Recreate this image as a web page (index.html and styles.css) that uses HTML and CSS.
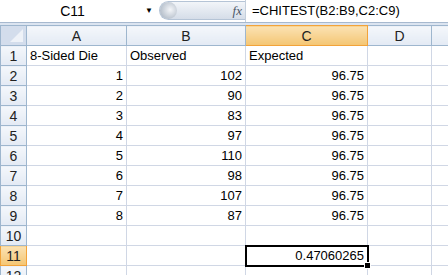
FILE: index.html
```html
<!DOCTYPE html>
<html lang="en">
<head>
  <meta charset="UTF-8">
  <title>CHITEST</title>
  <link rel="stylesheet" href="styles.css">
</head>
<body>
  <!-- Name box and formula bar -->
  <div class="toolbar">
    <div class="namebox">C11</div>
    <div class="dropdown">&#9660;</div>
    <div class="pillarea">
      <div class="pill"><span class="knob"></span><span class="fx">fx</span></div>
    </div>
    <div class="formula">=CHITEST(B2:B9,C2:C9)</div>
  </div>
  <div class="band"></div>

  <table class="sheet">
    <colgroup>
      <col class="c-rh">
      <col class="c-a">
      <col class="c-b">
      <col class="c-c">
      <col class="c-d">
      <col class="c-e">
    </colgroup>
    <tr class="colheads">
      <th class="corner"><span class="tri"></span></th>
      <th>A</th>
      <th>B</th>
      <th class="sel">C</th>
      <th>D</th>
      <th></th>
    </tr>
    <tr><th>1</th><td>8-Sided Die</td><td>Observed</td><td>Expected</td><td></td><td></td></tr>
    <tr><th>2</th><td class="num">1</td><td class="num">102</td><td class="num">96.75</td><td></td><td></td></tr>
    <tr><th>3</th><td class="num">2</td><td class="num">90</td><td class="num">96.75</td><td></td><td></td></tr>
    <tr><th>4</th><td class="num">3</td><td class="num">83</td><td class="num">96.75</td><td></td><td></td></tr>
    <tr><th>5</th><td class="num">4</td><td class="num">97</td><td class="num">96.75</td><td></td><td></td></tr>
    <tr><th>6</th><td class="num">5</td><td class="num">110</td><td class="num">96.75</td><td></td><td></td></tr>
    <tr><th>7</th><td class="num">6</td><td class="num">98</td><td class="num">96.75</td><td></td><td></td></tr>
    <tr><th>8</th><td class="num">7</td><td class="num">107</td><td class="num">96.75</td><td></td><td></td></tr>
    <tr><th>9</th><td class="num">8</td><td class="num">87</td><td class="num">96.75</td><td></td><td></td></tr>
    <tr><th>10</th><td></td><td></td><td></td><td></td><td></td></tr>
    <tr><th class="sel">11</th><td></td><td></td><td class="num active">0.47060265<span class="handle"></span></td><td></td><td></td></tr>
    <tr><th>12</th><td></td><td></td><td></td><td></td><td></td></tr>
  </table>
</body>
</html>
```

FILE: styles.css
```css
body {
  margin: 0;
  width: 448px;
  height: 275px;
  overflow: hidden;
  background-color: #fff;
  font-family: 'Liberation Sans', Arial, sans-serif;
  color: #000;
}

/* formula bar */
.toolbar {
  display: flex;
  height: 22px;
  border-bottom: 1px solid #a7b9cf;
  background-color: #fff;
}
.namebox {
  width: 145px;
  font-size: 14px;
  line-height: 22px;
  text-align: center;
}
.dropdown {
  width: 14px;
  font-size: 8px;
  line-height: 22px;
  color: #000;
}
.pillarea {
  width: 86px;
  padding-top: 1px;
}
.pill {
  display: flex;
  align-items: center;
  justify-content: space-between;
  height: 19px;
  border-radius: 10px 0 0 10px;
  background: linear-gradient(#f2f5f9, #d5dde8);
  border: 1px solid #b5c4d6;
  border-right: none;
  box-sizing: border-box;
  padding-right: 3px;
}
.knob {
  width: 17px;
  height: 17px;
  border-radius: 50%;
  background: radial-gradient(circle at 60% 45%, #f4f6f9, #b9c2cd 70%, #8f9baa);
}
.fx {
  font-family: 'Liberation Serif', serif;
  font-style: italic;
  font-size: 13px;
  color: #4a5766;
}
.formula {
  flex: 1;
  font-size: 13px;
  line-height: 22px;
  padding-left: 6px;
  border-left: 1px solid #c4cfdc;
}
.band {
  height: 2px;
  background-color: #dbe4f0;
}

/* sheet grid */
.sheet {
  border-collapse: collapse;
  table-layout: fixed;
  width: 448px;
  font-size: 13px;
}
.c-rh { width: 26px; }
.c-a { width: 100px; }
.c-b { width: 119px; }
.c-c { width: 122px; }
.c-d { width: 64px; }
.c-e { width: 17px; }

.sheet tr {
  height: 20px;
}
.sheet td {
  border: 1px solid #d0d7e5;
  padding: 0 3px;
  height: 19px;
  white-space: nowrap;
  overflow: visible;
}
.sheet td.num {
  text-align: right;
}
.sheet th {
  font-weight: normal;
  font-size: 14px;
  background: linear-gradient(#f4f7fb, #e3eaf4);
  border: 1px solid #9eb6ce;
  color: #222;
  padding: 0;
  height: 19px;
  text-align: center;
}
.sheet th.sel {
  background: linear-gradient(#fbe2b3, #f4c673);
  border-color: #f2a33a;
}
.sheet th.corner {
  background: #d3ddec;
  position: relative;
}
.tri {
  position: absolute;
  right: 3px;
  bottom: 3px;
  width: 0;
  height: 0;
  border-left: 13px solid transparent;
  border-bottom: 13px solid #eef2f8;
}
.sheet td.active {
  position: relative;
  outline: 2px solid #000;
  outline-offset: -1px;
}
.handle {
  position: absolute;
  right: -4px;
  bottom: -4px;
  width: 5px;
  height: 5px;
  background-color: #000;
  border: 1px solid #fff;
}
```
